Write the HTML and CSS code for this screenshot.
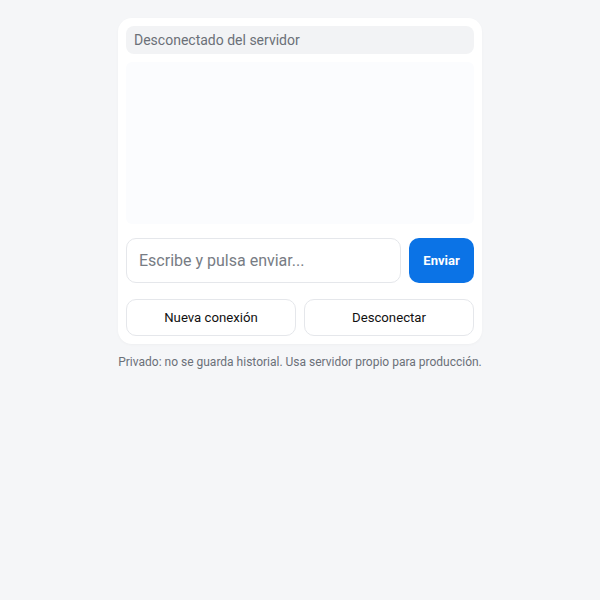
FILE: index.html
```html
<!DOCTYPE html>
<html lang="es">
<head>
<meta charset="utf-8">
<title>Chat</title>
<link rel="stylesheet" href="styles.css">
</head>
<body>
<main class="wrap">
  <section class="card">
    <div class="status">Desconectado del servidor</div>
    <div class="messages"></div>
    <div class="composer">
      <input class="input" type="text" placeholder="Escribe y pulsa enviar...">
      <button class="send">Enviar</button>
    </div>
    <div class="actions">
      <button class="btn">Nueva conexión</button>
      <button class="btn">Desconectar</button>
    </div>
  </section>
  <p class="note">Privado: no se guarda historial. Usa servidor propio para producción.</p>
</main>
</body>
</html>
```
FILE: styles.css
```css
* { box-sizing: border-box; }
html, body { margin: 0; padding: 0; }
body {
  background: #f5f6f8;
  font-family: Roboto, "Liberation Sans", sans-serif;
  color: #111;
}
.wrap {
  width: 364px;
  margin: 18px auto 0;
}
.card {
  background: #fff;
  border-radius: 14px;
  padding: 8px;
  display: flex;
  flex-direction: column;
  box-shadow: 0 1px 3px rgba(0,0,0,0.03);
}
.status {
  height: 28px;
  background: #f2f3f5;
  border-radius: 8px;
  padding: 0 8px;
  display: flex;
  align-items: center;
  font-size: 14px;
  color: #6b7078;
}
.messages {
  margin-top: 8px;
  height: 162px;
  background: #fbfcfe;
  border-radius: 6px;
}
.composer {
  margin-top: 14px;
  display: flex;
  gap: 8px;
}
.input {
  flex: 1;
  height: 45px;
  border: 1px solid #e5e7eb;
  border-radius: 10px;
  padding: 0 12px;
  font-family: inherit;
  font-size: 16px;
  color: #111;
  background: #fff;
  outline: none;
}
.input::placeholder { color: #777c84; }
.send {
  width: 65px;
  height: 45px;
  border: none;
  border-radius: 10px;
  background: #0b73e6;
  color: #fff;
  font-family: inherit;
  font-weight: 700;
  font-size: 13px;
}
.actions {
  margin-top: 16px;
  display: grid;
  grid-template-columns: 1fr 1fr;
  gap: 8px;
}
.btn {
  height: 37px;
  border: 1px solid #e5e7eb;
  border-radius: 10px;
  background: #fff;
  font-family: inherit;
  font-size: 13.2px;
  color: #111;
}
.note {
  margin: 10px 0 0;
  font-size: 12px;
  line-height: 16px;
  color: #6b7078;
  text-align: center;
  white-space: nowrap;
}
```
